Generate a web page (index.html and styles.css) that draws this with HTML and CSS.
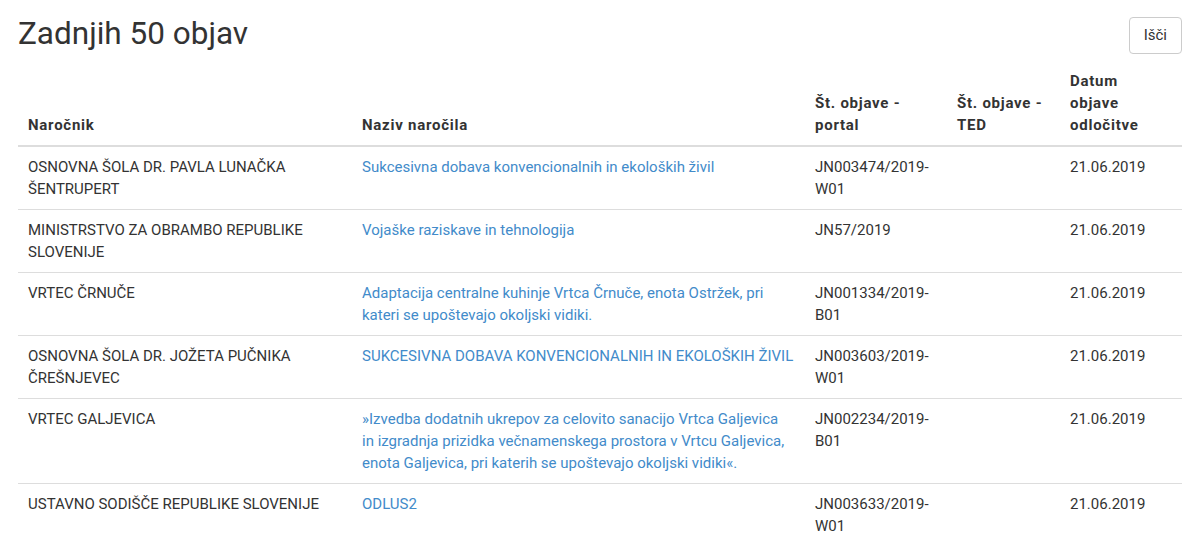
FILE: index.html
```html
<!DOCTYPE html>
<html lang="sl">
<head>
<meta charset="utf-8">
<title>Zadnjih 50 objav</title>
<link rel="stylesheet" href="styles.css">
</head>
<body>
<div class="page">
  <div class="toolbar">
    <h1 class="title">Zadnjih 50 objav</h1>
    <button class="btn" type="button">Išči</button>
  </div>
  <table class="list">
    <colgroup>
      <col class="c-narocnik">
      <col class="c-naziv">
      <col class="c-portal">
      <col class="c-ted">
      <col class="c-datum">
    </colgroup>
    <thead>
      <tr>
        <th>Naročnik</th>
        <th>Naziv naročila</th>
        <th>Št. objave - portal</th>
        <th>Št. objave - TED</th>
        <th>Datum objave odločitve</th>
      </tr>
    </thead>
    <tbody>
      <tr>
        <td>OSNOVNA ŠOLA DR. PAVLA LUNAČKA ŠENTRUPERT</td>
        <td><a href="#">Sukcesivna dobava konvencionalnih in ekoloških živil</a></td>
        <td>JN003474/2019-W01</td>
        <td></td>
        <td>21.06.2019</td>
      </tr>
      <tr>
        <td>MINISTRSTVO ZA OBRAMBO REPUBLIKE SLOVENIJE</td>
        <td><a href="#">Vojaške raziskave in tehnologija</a></td>
        <td>JN57/2019</td>
        <td></td>
        <td>21.06.2019</td>
      </tr>
      <tr>
        <td>VRTEC ČRNUČE</td>
        <td><a href="#">Adaptacija centralne kuhinje Vrtca Črnuče, enota Ostržek, pri kateri se upoštevajo okoljski vidiki.</a></td>
        <td>JN001334/2019-B01</td>
        <td></td>
        <td>21.06.2019</td>
      </tr>
      <tr>
        <td>OSNOVNA ŠOLA DR. JOŽETA PUČNIKA ČREŠNJEVEC</td>
        <td><a href="#">SUKCESIVNA DOBAVA KONVENCIONALNIH IN EKOLOŠKIH ŽIVIL</a></td>
        <td>JN003603/2019-W01</td>
        <td></td>
        <td>21.06.2019</td>
      </tr>
      <tr>
        <td>VRTEC GALJEVICA</td>
        <td><a href="#">»Izvedba dodatnih ukrepov za celovito sanacijo Vrtca Galjevica<br>in izgradnja prizidka večnamenskega prostora v Vrtcu Galjevica, enota Galjevica, pri katerih se upoštevajo okoljski vidiki«.</a></td>
        <td>JN002234/2019-B01</td>
        <td></td>
        <td>21.06.2019</td>
      </tr>
      <tr>
        <td>USTAVNO SODIŠČE REPUBLIKE SLOVENIJE</td>
        <td><a href="#">ODLUS2</a></td>
        <td>JN003633/2019-W01</td>
        <td></td>
        <td>21.06.2019</td>
      </tr>
    </tbody>
  </table>
</div>
</body>
</html>
```

FILE: styles.css
```css
html, body {
  margin: 0;
  padding: 0;
  background: #fff;
}

body {
  font-family: Roboto, "Liberation Sans", Arial, sans-serif;
  font-size: 15px;
  line-height: 22px;
  color: #333;
}

.page {
  padding: 16px 18px 0;
}

.toolbar {
  display: flex;
  justify-content: space-between;
  align-items: flex-start;
  height: 45px;
}

.title {
  margin: 0;
  font-size: 31.5px;
  font-weight: 400;
  line-height: 35px;
  color: #333;
}

.btn {
  margin-top: 1px;
  font-family: inherit;
  font-size: 15px;
  line-height: 21px;
  color: #333;
  background: #fff;
  border: 1px solid #ccc;
  border-radius: 4px;
  padding: 7px 14px;
  cursor: pointer;
}

.list {
  width: 100%;
  table-layout: fixed;
  border-collapse: collapse;
  border-spacing: 0;
}

.c-narocnik { width: 334px; }
.c-naziv { width: 453px; }
.c-portal { width: 142px; }
.c-ted { width: 113px; }
.c-datum { width: 122px; }

.list th {
  text-align: left;
  vertical-align: bottom;
  font-weight: 700;
  letter-spacing: 0.75px;
  padding: 9px 14px 9px 10px;
  border-bottom: 2px solid #ddd;
}

.list td {
  vertical-align: top;
  padding: 9px 10px;
  border-top: 1px solid #ddd;
}

.list tbody tr:first-child td {
  border-top: 0;
}

.list a {
  color: #428bca;
  text-decoration: none;
}
```
